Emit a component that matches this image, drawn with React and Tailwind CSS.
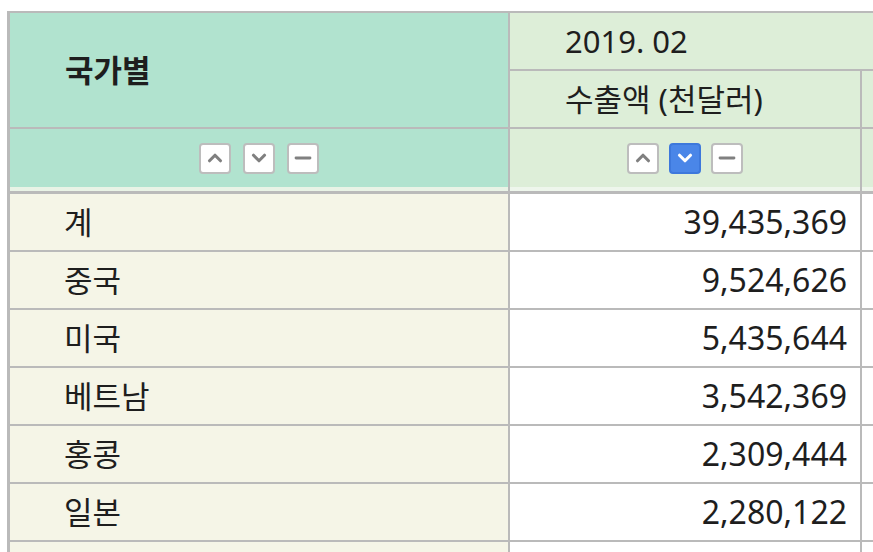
import React from "react";
import { ChevronUp, ChevronDown, Minus } from "lucide-react";

const rows = [
  { country: "계", value: "39,435,369" },
  { country: "중국", value: "9,524,626" },
  { country: "미국", value: "5,435,644" },
  { country: "베트남", value: "3,542,369" },
  { country: "홍콩", value: "2,309,444" },
  { country: "일본", value: "2,280,122" },
  { country: "", value: "" },
];

function SortButton({ active, children }) {
  return (
    <button
      type="button"
      className={`w-[32px] h-[31px] rounded-[4px] border-2 flex items-center justify-center ${
        active
          ? "bg-[#4a86e8] border-[#3d78dc] text-white"
          : "bg-white border-[#bdbdbd] text-[#808080]"
      }`}
    >
      {children}
    </button>
  );
}

function SortGroup({ activeDown, gap }) {
  return (
    <div className={`flex items-center ${gap}`}>
      <SortButton>
        <ChevronUp size={22} strokeWidth={3.4} />
      </SortButton>
      <SortButton active={activeDown}>
        <ChevronDown size={22} strokeWidth={3.4} />
      </SortButton>
      <SortButton>
        <Minus size={24} strokeWidth={2.8} />
      </SortButton>
    </div>
  );
}

export default function App() {
  return (
    <div
      className="w-[873px] h-[552px] overflow-hidden bg-white pl-[7px] pt-[11px] text-[#1e1e1e]"
      style={{ fontFamily: '"Noto Sans", "Noto Sans CJK KR", sans-serif' }}
    >
      <div className="w-[920px] border-t-2 border-l-[3px] border-[#bababa]">
        {/* header */}
        <div className="flex">
          <div className="w-[500px] h-[116px] shrink-0 border-r-2 border-b-2 border-[#bababa] bg-[#b1e3cf] flex items-center pl-[55px] text-[31px] font-bold">
            국가별
          </div>
          <div className="flex-1 flex flex-col">
            <div className="h-[58px] border-b-2 border-[#bababa] bg-[#ddeed8] flex items-center pl-[55px] text-[31px]">
              2019. 02
            </div>
            <div className="flex h-[58px]">
              <div className="w-[352px] shrink-0 border-r-2 border-b-2 border-[#bababa] bg-[#ddeed8] flex items-center pl-[55px] text-[31px]">
                수출액 (천달러)
              </div>
              <div className="flex-1 border-b-2 border-[#bababa] bg-[#ddeed8]"></div>
            </div>
          </div>
        </div>

        {/* sort buttons */}
        <div className="flex h-[65px]">
          <div className="w-[500px] shrink-0 border-r-2 border-b-[3px] border-[#bababa] bg-[#b1e3cf] shadow-[inset_0_-4px_0_#e9f3e6] flex items-center justify-center pb-[4px]">
            <SortGroup gap="gap-[12px]" />
          </div>
          <div className="w-[352px] shrink-0 border-r-2 border-b-[3px] border-[#bababa] bg-[#ddeed8] shadow-[inset_0_-4px_0_#eef6ec] flex items-center justify-center pb-[4px]">
            <SortGroup activeDown gap="gap-[10px]" />
          </div>
          <div className="flex-1 border-b-[3px] border-[#bababa] bg-[#ddeed8] shadow-[inset_0_-4px_0_#eef6ec]"></div>
        </div>

        {/* data */}
        {rows.map((row, i) => (
          <div key={i} className="flex h-[58px]">
            <div className="w-[500px] shrink-0 border-r-2 border-b-2 border-[#bababa] bg-[#f5f5e7] flex items-center pl-[54px] text-[31px]">
              {row.country}
            </div>
            <div className="w-[352px] shrink-0 border-r-2 border-b-2 border-[#bababa] bg-white flex items-center justify-end pr-[13px] text-[32px]">
              {row.value}
            </div>
            <div className="flex-1 border-b-2 border-[#bababa] bg-white"></div>
          </div>
        ))}
      </div>
    </div>
  );
}
